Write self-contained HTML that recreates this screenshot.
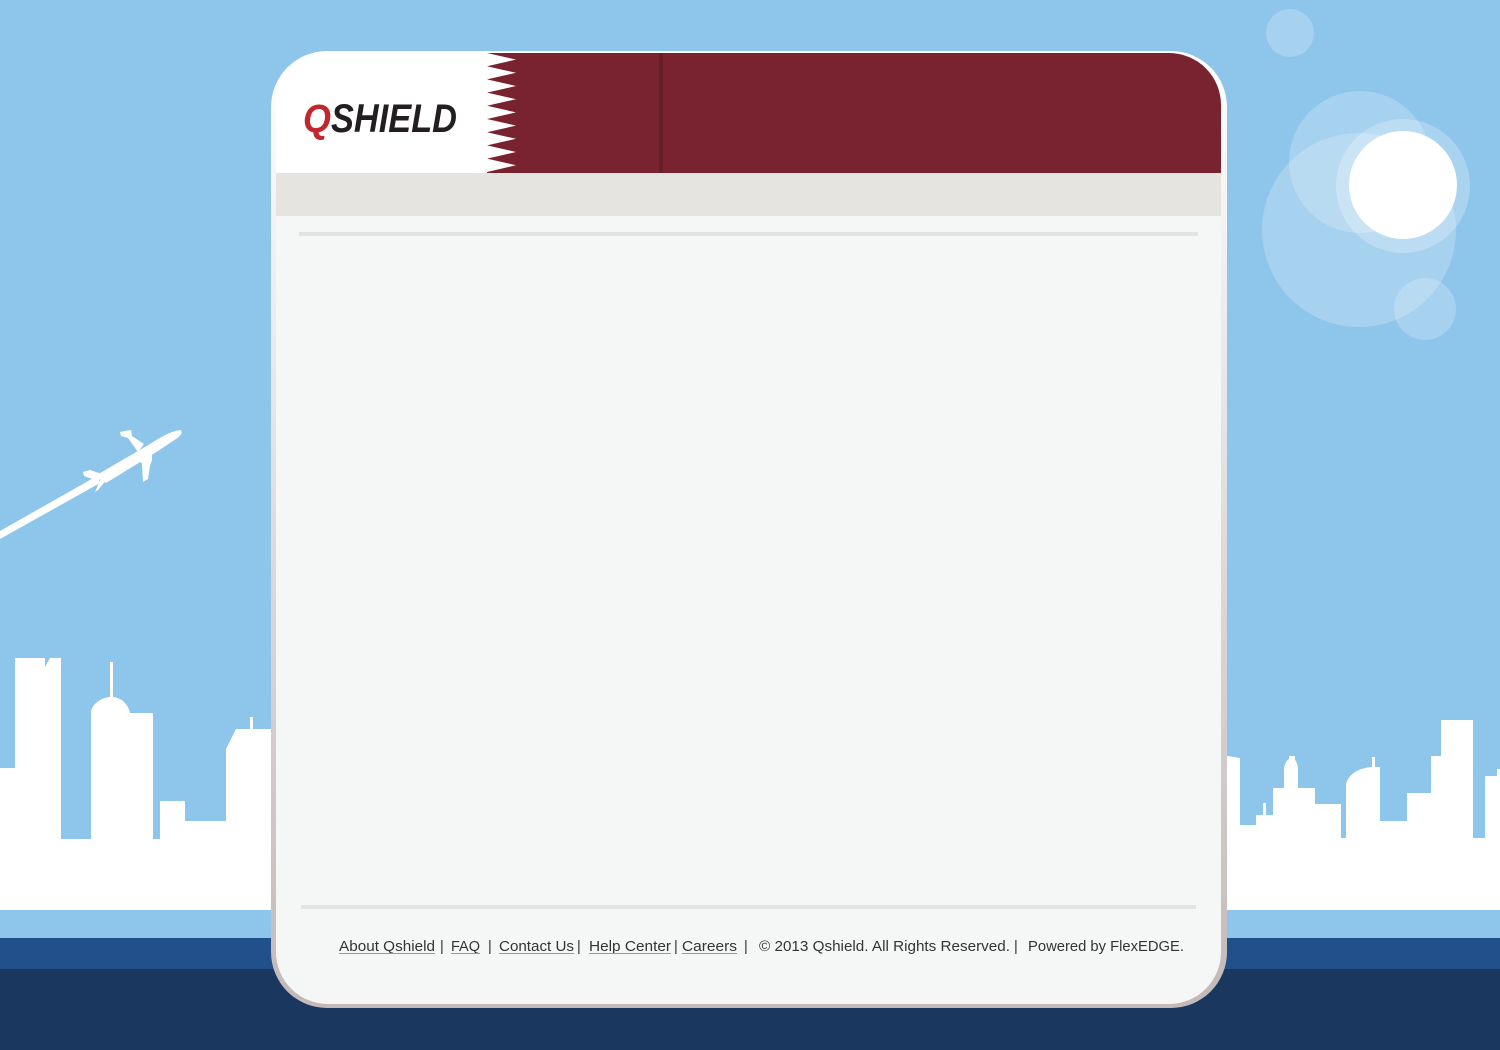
<!DOCTYPE html>
<html><head><meta charset="utf-8"><style>
html,body{margin:0;padding:0;width:1500px;height:1050px;overflow:hidden;background:#8ec5eb;}
svg{position:absolute;left:0;top:0;}
</style></head><body>
<svg width="1500" height="1050" viewBox="0 0 1500 1050" xmlns="http://www.w3.org/2000/svg">
<rect width="1500" height="1050" fill="#8ec5eb"/>
<g fill="#fff">
<circle cx="1290" cy="33" r="24" opacity="0.22"/>
<circle cx="1359" cy="230" r="97" opacity="0.22"/>
<circle cx="1360" cy="162" r="71" opacity="0.22"/>
<circle cx="1403" cy="186" r="67" opacity="0.25"/>
<circle cx="1425" cy="309" r="31" opacity="0.22"/>
<circle cx="1403" cy="185" r="54" opacity="1"/>
</g>
<!-- plane -->
<g fill="#fff">
<polygon points="0,531 0,539 100,483 97,476"/>
<path d="M95,476 L150,444 C162,436 172,431 180,430 C183,431 182,435 176,439 L158,451 L106,483 Z"/>
<polygon points="144,444 132,436 131,430 125,431 120,432 121,436 128,438 138,452"/>
<polygon points="136,456 142,464 143,482 148,479 150,466 152,460 152,448"/>
<polygon points="105,475 90,470 83,472 84,476 98,481"/>
<polygon points="100,480 95,492 98,490 108,478"/>
</g>
<g fill="#fff">
<path d="M0,768 L15,768 L15,658 L45,658 L45,667 L50,658 L61,658 L61,839 L91,839 L91,713 C91,705 100,698 110,697 L110,662 L113,662 L113,697 C122,698 128,704 130,713 L153,713 L153,839 L160,839 L160,801 L185,801 L185,821 L226,821 L226,749 L236,729 L250,729 L250,717 L253,717 L253,729 L272,729 L272,910 L0,910 Z"/>
<path d="M1222,755 L1240,758 L1240,825 L1256,825 L1256,815 L1263,815 L1263,803 L1266,803 L1266,815 L1273,815 L1273,788 L1284,788 L1284,770 C1284,764 1287,760 1289,759 L1289,756 L1295,756 L1295,760 C1297,762 1298,766 1298,770 L1298,788 L1315,788 L1315,804 L1341,804 L1341,838 L1346,838 L1346,787 C1346,775 1358,768 1372,767 L1372,757 L1375,757 L1375,767 L1380,767 L1380,821 L1407,821 L1407,793 L1431,793 L1431,756 L1441,756 L1441,720 L1473,720 L1473,838 L1485,838 L1485,776 L1497,776 L1497,769 L1500,769 L1500,910 L1222,910 Z"/>
</g>
<rect x="0" y="938" width="1500" height="31" fill="#22508a"/>
<rect x="0" y="969" width="1500" height="81" fill="#1a3760"/>
<defs>
<linearGradient id="bd" x1="0" y1="0" x2="0" y2="1">
<stop offset="0" stop-color="#ffffff"/><stop offset="0.35" stop-color="#e8e6e6"/><stop offset="1" stop-color="#c4b9b9"/>
</linearGradient>
<clipPath id="inner"><rect x="276" y="53" width="945" height="951" rx="52"/></clipPath>
</defs>
<rect x="271" y="51" width="956" height="957" rx="56" fill="url(#bd)"/>
<rect x="276" y="53" width="945" height="951" rx="52" fill="#f5f7f6"/>
<g clip-path="url(#inner)">
<rect x="276" y="53" width="945" height="120" fill="#fff"/>
<rect x="487" y="53" width="734" height="120" fill="#78232f"/>
<rect x="659" y="53" width="4" height="120" fill="#5e1a24" opacity="0.6"/>
<polygon fill="#fff" points="487,53 516,59.6 487,66.2 516,72.8 487,79.4 516,86 487,92.6 516,99.2 487,105.8 516,112.4 487,119 516,125.6 487,132.2 516,138.8 487,145.4 516,152 487,158.6 516,165.2 487,172"/>
<rect x="276" y="173" width="945" height="43" fill="#e5e4e0"/>
</g>
<rect x="299" y="232" width="899" height="4" fill="#e3e3e1"/>
<rect x="301" y="905" width="895" height="4" fill="#e3e3e1"/>
<text x="303" y="132" font-family="Liberation Sans, sans-serif" font-weight="bold" font-style="italic" font-size="40" fill="#c1272d" textLength="28" lengthAdjust="spacingAndGlyphs">Q</text>
<text x="331" y="132" font-family="Liberation Sans, sans-serif" font-weight="bold" font-style="italic" font-size="40" fill="#231f20" textLength="126" lengthAdjust="spacingAndGlyphs">SHIELD</text>
<g font-family="Liberation Sans, sans-serif" font-size="14.5" fill="#333">
<text x="339" y="951" textLength="96" lengthAdjust="spacingAndGlyphs">About Qshield</text>
<text x="440" y="951">|</text>
<text x="451" y="951" textLength="29" lengthAdjust="spacingAndGlyphs">FAQ</text>
<text x="488" y="951">|</text>
<text x="499" y="951" textLength="75" lengthAdjust="spacingAndGlyphs">Contact Us</text>
<text x="577" y="951">|</text>
<text x="589" y="951" textLength="82" lengthAdjust="spacingAndGlyphs">Help Center</text>
<text x="674" y="951">|</text>
<text x="682" y="951" textLength="55" lengthAdjust="spacingAndGlyphs">Careers</text>
<text x="744" y="951">|</text>
<text x="759" y="951" textLength="251" lengthAdjust="spacingAndGlyphs">© 2013 Qshield. All Rights Reserved.</text>
<text x="1014" y="951">|</text>
<text x="1028" y="951" textLength="156" lengthAdjust="spacingAndGlyphs">Powered by FlexEDGE.</text>
</g>
<g fill="#999">
<rect x="339" y="953" width="96" height="1"/>
<rect x="451" y="953" width="29" height="1"/>
<rect x="499" y="953" width="75" height="1"/>
<rect x="589" y="953" width="82" height="1"/>
<rect x="682" y="953" width="55" height="1"/>
</g>
</svg>
</body></html>
